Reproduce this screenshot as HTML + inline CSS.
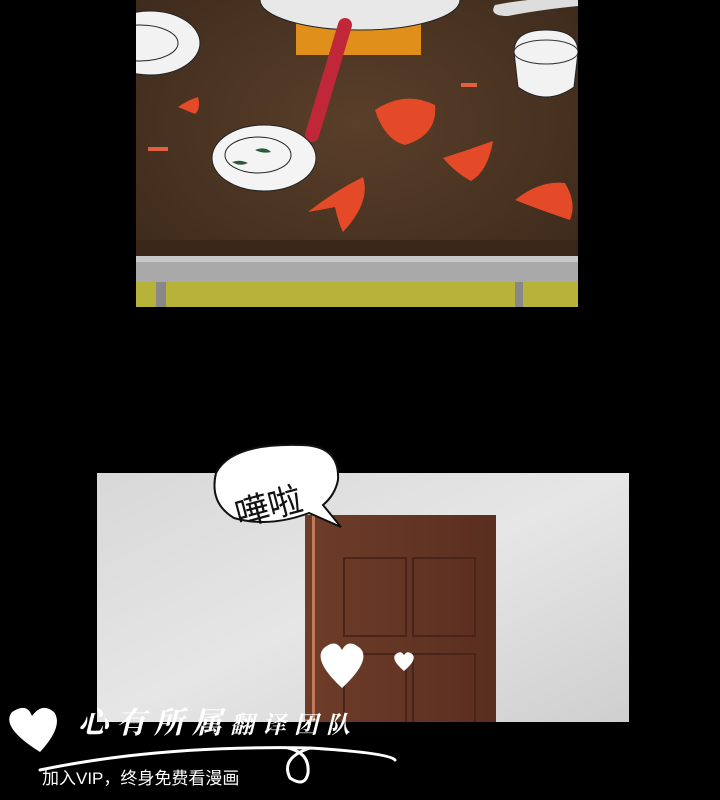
<!DOCTYPE html>
<html><head><meta charset="utf-8"><style>
html,body{margin:0;padding:0;background:#000;width:720px;height:800px;overflow:hidden;position:relative;font-family:"Liberation Sans","Noto Sans CJK SC",sans-serif}
.a{position:absolute}
</style></head><body>
<svg class="a" style="left:0;top:0" width="720" height="800">
<defs>
<radialGradient id="tb" cx="0.5" cy="0.4" r="0.7"><stop offset="0" stop-color="#5a3f2a"/><stop offset="1" stop-color="#3c291b"/></radialGradient>
<linearGradient id="wall" x1="0" y1="0" x2="1" y2="1"><stop offset="0" stop-color="#d8d8d8"/><stop offset="0.5" stop-color="#e6e6e6"/><stop offset="1" stop-color="#cfcfcf"/></linearGradient>
<linearGradient id="door" x1="0" x2="1"><stop offset="0" stop-color="#6e3d29"/><stop offset="1" stop-color="#5a2e20"/></linearGradient>
<clipPath id="c1"><rect x="136" y="0" width="442" height="307"/></clipPath>
<clipPath id="c2"><rect x="97" y="473" width="532" height="249"/></clipPath>
</defs>
<g clip-path="url(#c1)">
<rect x="136" y="0" width="442" height="307" fill="url(#tb)"/>
<rect x="136" y="240" width="442" height="20" fill="#3a2618"/>
<rect x="136" y="256" width="442" height="26" fill="#a9a9a9"/>
<rect x="136" y="256" width="442" height="6" fill="#c8c8c8"/>
<rect x="136" y="282" width="442" height="25" fill="#b7b33a"/>
<rect x="156" y="282" width="10" height="25" fill="#888"/>
<rect x="515" y="282" width="8" height="25" fill="#888"/>
<rect x="296" y="22" width="125" height="33" fill="#e0901a"/>
<ellipse cx="360" cy="0" rx="100" ry="30" fill="#e8e8e8" stroke="#222"/>
<line x1="345" y1="25" x2="312" y2="135" stroke="#c0283a" stroke-width="14" stroke-linecap="round"/>
<ellipse cx="150" cy="43" rx="50" ry="32" fill="#f2f2f2" stroke="#222"/>
<ellipse cx="140" cy="43" rx="38" ry="18" fill="none" stroke="#222"/>
<ellipse cx="264" cy="158" rx="52" ry="33" fill="#f4f4f4" stroke="#222"/>
<ellipse cx="258" cy="155" rx="33" ry="18" fill="none" stroke="#222"/>
<path d="M255 150 q10 -4 16 2 q-8 2 -16 -2z M232 162 q8 -3 16 1 q-8 4 -16-1z" fill="#2a5a3a"/>
<path d="M514 52 q0 -22 32 -22 q32 0 32 22 l-4 35 q-28 20 -56 0z" fill="#f2f2f2" stroke="#222"/>
<ellipse cx="546" cy="52" rx="32" ry="12" fill="none" stroke="#333"/>
<path d="M495 5 q40 -8 83 -7 v8 q-40 4 -70 10 q-20 0 -13 -11z" fill="#ddd"/>
<path d="M375 110 q30 -20 60 -5 q3 30 -30 40 q-20 -5 -30 -35z" fill="#e44a28"/>
<path d="M443 158 q25 -8 50 -17 q-5 30 -22 40 q-15 -8 -28 -23z" fill="#e44a28"/>
<path d="M515 200 q25 -20 50 -17 q12 20 5 37 q-30 -10 -55 -20z" fill="#e44a28"/>
<path d="M308 212 q25 -20 55 -35 q8 25 -20 55 q-5 -10 -8 -25 q-15 3 -27 5z" fill="#e44a28"/>
<path d="M178 107 q10 -7 20 -10 q3 12 -3 17z" fill="#e44a28"/>
<rect x="148" y="147" width="20" height="4" fill="#e06040"/>
<rect x="461" y="83" width="16" height="4" fill="#e06040"/>
</g>
<g clip-path="url(#c2)">
<rect x="97" y="473" width="532" height="249" fill="url(#wall)"/>
<rect x="305" y="515" width="191" height="207" fill="url(#door)"/>
<rect x="312" y="515" width="3" height="207" fill="#c07a5a"/>
<rect x="344" y="558" width="62" height="78" fill="none" stroke="#4a2418" stroke-width="2"/>
<rect x="413" y="558" width="62" height="78" fill="none" stroke="#4a2418" stroke-width="2"/>
<rect x="344" y="654" width="62" height="80" fill="none" stroke="#4a2418" stroke-width="2"/>
<rect x="413" y="654" width="62" height="80" fill="none" stroke="#4a2418" stroke-width="2"/>
</g>
<path d="M300 445 q40 0 38 35 q-3 15 -15 25 l18 22 l-32 -14 q-40 15 -75 5 q-25 -15 -18 -45 q15 -30 84 -28z" fill="#fff" stroke="#111" stroke-width="2"/>
<text x="232" y="515" font-size="34" font-family="Liberation Sans,'Noto Sans CJK SC',sans-serif" fill="#111" transform="rotate(-15 280 495)">嘩啦</text>
<path d="M342 688 q-30 -28 -18 -40 q12 -10 18 2 q6 -12 18 -2 q12 12 -18 40z" fill="#fff"/>
<path d="M404 671 q-14 -12 -8 -17 q5 -4 8 1 q3 -5 8 -1 q6 5 -8 17z" fill="#fff"/>
<path d="M40 752 q-40 -25 -28 -40 q15 -10 20 4 q10 -14 22 -4 q10 14 -14 40z" fill="#fff"/>
<path d="M40 770 q120 -25 270 -22 q80 5 85 12 M310 748 q-30 10 -20 30 q15 10 18 -5 q2 -20 -20 -25" fill="none" stroke="#fff" stroke-width="3" stroke-linecap="round"/>
</svg>
<div class="a" style="left:78px;top:698px;color:#fff;font-size:30px;font-weight:bold;font-family:'Noto Serif CJK SC',serif;letter-spacing:8px;font-style:italic">心有所属<span style="font-size:24px">翻译团队</span></div>
<div class="a" style="left:42px;top:764px;color:#fff;font-size:17px;font-family:'Liberation Sans','Noto Sans CJK SC',sans-serif">加入VIP，终身免费看漫画</div>
</body></html>
